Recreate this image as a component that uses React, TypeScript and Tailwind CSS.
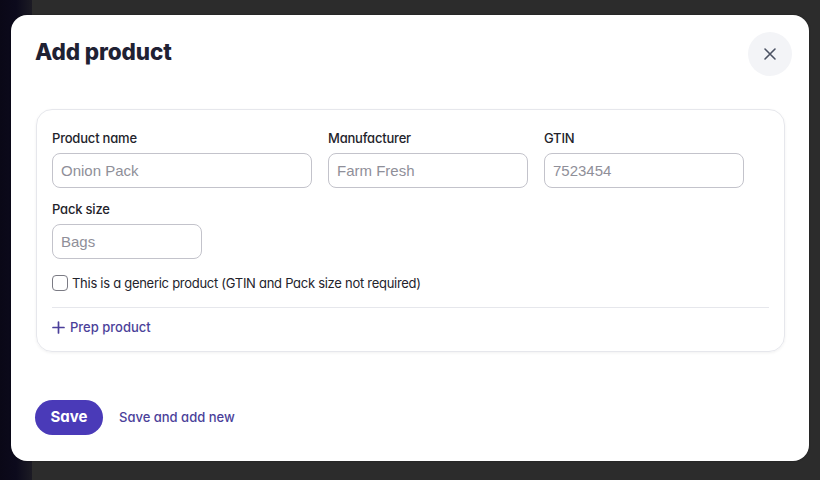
import React from "react";

const poppins = "font-['Inter',sans-serif] [font-feature-settings:'cv11','ss01']";

function Field({ label, placeholder, width }: { label: string; placeholder: string; width: string }) {
  return (
    <div className="flex flex-col">
      <label className={`${poppins} text-[13px] leading-[20px] font-medium text-[#23232b] tracking-[-0.2px]`}>{label}</label>
      <input
        className={`mt-[5px] ${width} h-[35px] rounded-[8px] border border-[#c3c3cb] bg-white px-[8px] font-['Liberation_Sans',Arial,sans-serif] text-[15px] text-[#222] placeholder:text-[#8f8f99] outline-none`}
        placeholder={placeholder}
      />
    </div>
  );
}

export default function App() {
  return (
    <div className="relative w-[820px] h-[480px] overflow-hidden flex bg-[#2b2b2b]">
      <div className="w-[32px] h-full bg-gradient-to-r from-[#0a0817] via-[#0c0a1c] to-[#1c1b24]" />
      <div className="flex-1 h-full bg-[#2c2c2c]" />

      <div className="absolute left-[11px] top-[15px] w-[798px] h-[446px] rounded-[16px] bg-white flex flex-col shadow-[0_0_2px_rgba(0,0,0,0.4)]">
        <div className="flex items-start justify-between pl-[24px] pr-[17px] pt-[17px]">
          <h1 className={`${poppins} mt-[4px] text-[22.5px] leading-[32px] font-extrabold text-[#1f2133] tracking-[-0.1px]`}>Add product</h1>
          <button className="w-[44px] h-[44px] rounded-full bg-[#f3f4f7] flex items-center justify-center">
            <svg width="14" height="14" viewBox="0 0 14 14" fill="none" stroke="#4b5263" strokeWidth="1.6" strokeLinecap="round">
              <path d="M2 2L12 12M12 2L2 12" />
            </svg>
          </button>
        </div>

        <div className="ml-[25px] mr-[24px] mt-[33px] rounded-[16px] border border-[#e6e7ec] shadow-[0_1px_3px_rgba(0,0,0,0.06)] px-[15px] pt-[18px] pb-[14px]">
          <div className="flex gap-[16px]">
            <Field label="Product name" placeholder="Onion Pack" width="w-[260px]" />
            <Field label="Manufacturer" placeholder="Farm Fresh" width="w-[200px]" />
            <Field label="GTIN" placeholder="7523454" width="w-[200px]" />
          </div>
          <div className="mt-[11px]">
            <Field label="Pack size" placeholder="Bags" width="w-[150px]" />
          </div>
          <label className="mt-[16px] flex items-center gap-[4px] h-[16px]">
            <span className="w-[16px] h-[16px] rounded-[4px] border border-[#7b7b84] bg-white" />
            <span className={`${poppins} text-[13px] leading-[20px] text-[#23232b] tracking-[-0.28px]`}>This is a generic product (GTIN and Pack size not required)</span>
          </label>
          <div className="mt-[16px] h-px bg-[#e6e7ec]" />
          <button className={`mt-[9px] flex items-center gap-[5px] ${poppins} text-[13px] leading-[20px] font-medium text-[#4b3f9a]`}>
            <svg width="13" height="13" viewBox="0 0 13 13" fill="none" stroke="#4b3f9a" strokeWidth="1.7" strokeLinecap="round">
              <path d="M6.5 1V12M1 6.5H12" />
            </svg>
            Prep product
          </button>
        </div>

        <div className="mt-[48px] pl-[24px] flex items-center gap-[16px]">
          <button className={`w-[68px] h-[35px] rounded-full bg-[#4a3ab8] text-white ${poppins} text-[15px] font-bold`}>Save</button>
          <button className={`${poppins} text-[13px] font-medium text-[#4b3f9a]`}>Save and add new</button>
        </div>
      </div>
    </div>
  );
}
